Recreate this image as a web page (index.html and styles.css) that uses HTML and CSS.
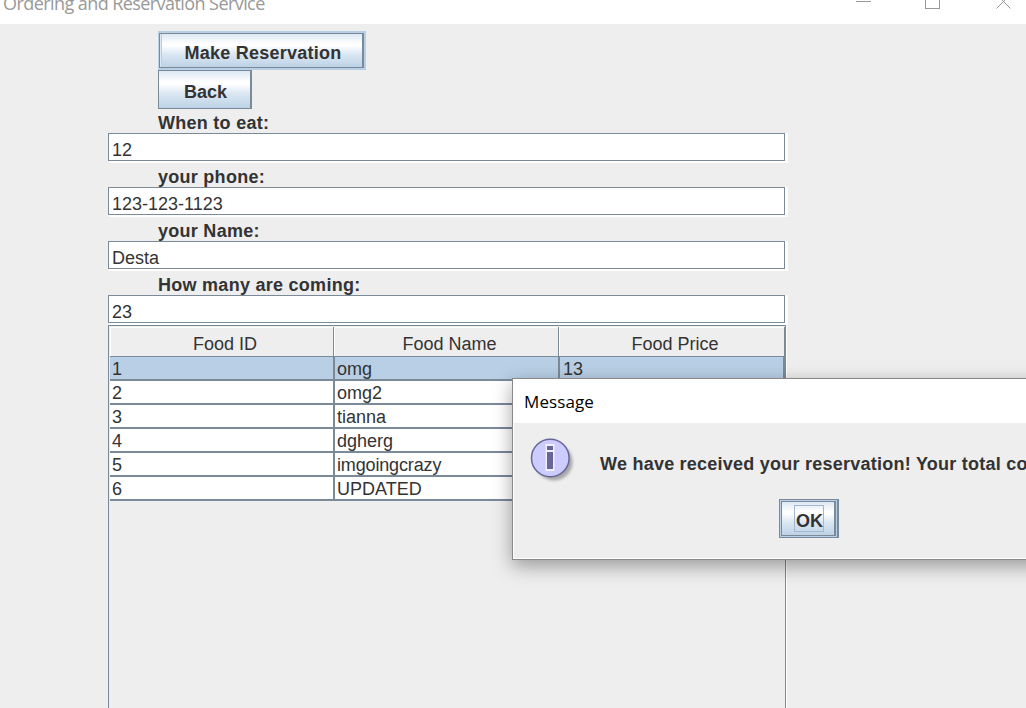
FILE: index.html
```html
<!DOCTYPE html>
<html lang="en">
<head>
<meta charset="utf-8">
<title>Ordering and Reservation Service</title>
<link rel="stylesheet" href="styles.css">
</head>
<body>
<div class="window">
  <header class="titlebar">
    <span class="title">Ordering and Reservation Service</span>
    <svg class="controls" width="186" height="24" viewBox="0 0 186 24" shape-rendering="crispEdges" fill="none" stroke="#999">
      <path d="M16 1.5H31"/>
      <path d="M85.5 -5.5H99.500V8.500H85.500Z"/>
      <path d="M156.500 8.500L170.500 -5.500M170.500 8.500L156.500 -5.500" shape-rendering="auto"/>
    </svg>
  </header>
  <main class="form">
    <div class="actions">
      <button class="btn btn-default"><span class="btn-face">Make Reservation</span></button>
      <button class="btn btn-back">Back</button>
    </div>
    <div class="label">When to eat:</div>
    <div class="field"><div class="input">12</div></div>
    <div class="label">your phone:</div>
    <div class="field"><div class="input">123-123-1123</div></div>
    <div class="label">your Name:</div>
    <div class="field"><div class="input">Desta</div></div>
    <div class="label">How many are coming:</div>
    <div class="field"><div class="input">23</div></div>
    <section class="scroll">
      <div class="row head"><div>Food ID</div><div>Food Name</div><div>Food Price</div></div>
      <div class="row selected"><div>1</div><div>omg</div><div>13</div></div>
      <div class="row"><div>2</div><div>omg2</div><div></div></div>
      <div class="row"><div>3</div><div>tianna</div><div></div></div>
      <div class="row"><div>4</div><div>dgherg</div><div></div></div>
      <div class="row"><div>5</div><div class="tight">imgoingcrazy</div><div></div></div>
      <div class="row"><div>6</div><div>UPDATED</div><div></div></div>
    </section>
  </main>
  <div class="dialog">
    <div class="dialog-title"><span>Message</span></div>
    <div class="dialog-body">
      <svg class="info" width="50" height="50" viewBox="0 0 50 50">
        <defs><filter id="soft" x="-20%" y="-20%" width="150%" height="150%"><feGaussianBlur stdDeviation="1.8"/></filter></defs>
        <circle cx="24" cy="24" r="18.500" fill="#777" opacity=".6" filter="url(#soft)"/>
        <circle cx="20.300" cy="20" r="18.800" fill="#ccccff" stroke="#666699" stroke-width="1.500"/>
        <path d="M15.500 6H24.500V33H15.500Z" fill="#f0f0ff"/>
        <path d="M17 8H23V12H17ZM17 14H23V31H17Z" fill="#666699"/>
      </svg>
      <span class="message">We have received your reservation! Your total co</span>
      <button class="ok"><span class="ok-face"><span class="focus">OK</span></span></button>
    </div>
  </div>
</div>
</body>
</html>
```
FILE: styles.css
```css
* { box-sizing: border-box; }
body { margin: 0; overflow: hidden; }
button { font: inherit; color: inherit; padding: 0; border-radius: 0; text-align: center; letter-spacing: inherit; }
.window {
  position: relative; width: 1026px; height: 708px; overflow: hidden;
  background: #eee; color: #333;
  font: 18px/20px "Liberation Sans", Arial, sans-serif;
}
.titlebar { display: flex; justify-content: space-between; height: 24px; background: #fff; overflow: hidden; }
.title { margin: -9px 0 0 3px; font: 18px/24px "Open Sans", "Noto Sans", sans-serif; color: #999; white-space: nowrap; letter-spacing: -.57px; }
.form { width: 680px; margin-left: 108px; padding-top: 7px; }
.actions { display: flex; flex-direction: column; align-items: flex-start; padding-left: 50px; font-weight: bold; letter-spacing: .25px; }
.btn { display: block; height: 39px; background: linear-gradient(#dde8f3 0, #fff 30%, #fff 35%, #dce8f3 60%, #bdd2e6 100%); border: 1px solid #7a8a99; border-right-width: 2px; padding: 5px 0 0 2px; }
.btn-default { width: 208px; border: 1px solid #b8cfe5; border-width: 2px 2px 2px 1px; padding: 0; background: #b8cfe5; }
.btn-face { display: block; height: 35px; padding: 3px 0 0 4px; border: 1px solid #7a8a99; border-right-width: 2px; line-height: 32px; box-shadow: inset 1px 0 #dce8f3, inset 2px 0 #b8cfe5; background: linear-gradient(#dde8f3 0, #fff 30%, #fff 35%, #dce8f3 60%, #bdd2e6 100%); }
.btn-back { width: 94px; letter-spacing: 0; }
.label { height: 24px; padding: 4px 0 0 50px; font-weight: bold; white-space: nowrap; letter-spacing: .27px; }
.field { height: 30px; width: 680px; background: linear-gradient(#fff, #fff) 1px 0 no-repeat; }
.input { height: 28px; width: 677px; border: 1px solid #7a8a99; padding: 6px 0 0 3px; line-height: 20px; }
.scroll { width: 678px; height: 400px; border: 1px solid #7a8a99; border-bottom: 0; padding: 1px 0 0 1px; box-shadow: 1px 0 #fff; }
.row { display: grid; grid-template-columns: 225px 225px 225px; height: 24px; line-height: 20px; background: #fff; }
.row > div { border-right: 2px solid #7a8a99; border-bottom: 2px solid #7a8a99; padding: 2px 0 0 2px; white-space: nowrap; }
.row > div:last-child { padding-left: 3px; }
.row > .tight { letter-spacing: -.15px; }
.head { grid-template-columns: 224px 225px 226px; height: 30px; background: #eee; }
.head > div, .head > div:last-child { text-align: center; border-right-width: 1px; border-bottom-width: 1px; box-shadow: inset 1px 1px #fff; padding: 7px 0 0 7px; }
.selected { background: #b8cfe5; }
.dialog { position: absolute; left: 512px; top: 378px; width: 620px; height: 182px; border: 1px solid #888; background: #eee; box-shadow: 0 6px 18px 0 rgba(0,0,0,.36); }
.dialog-title { height: 44px; background: #fff; color: #000; padding: 11px 0 0 11px; font: 17px/24px "Open Sans", "Noto Sans", sans-serif; letter-spacing: .1px; }
.dialog-body { display: grid; grid-template-columns: 87px 1fr; grid-template-rows: 76px 39px; height: 136px; border-left: 1px solid #fff; border-bottom: 1px solid #fff; font-weight: bold; }
.info { margin: 15px 0 0 16px; }
.message { margin-top: 31px; margin-left: -1px; white-space: nowrap; letter-spacing: .24px; }
.ok { grid-column: 2; margin-left: 178px; width: 60px; height: 39px; border: 1px solid #7a8a99; border-right-width: 2px; background: #b8cfe5; padding: 1px; }
.ok-face { display: flex; align-items: center; justify-content: center; height: 35px; border: 1px solid #7a8a99; border-right-width: 2px; padding-left: 2px; background: linear-gradient(#dde8f3 0, #fff 30%, #fff 35%, #dce8f3 60%, #bdd2e6 100%); }
.focus { width: 30px; height: 27px; border: 1px solid #a3b8cc; line-height: 30px; padding-left: 1px; }
```
